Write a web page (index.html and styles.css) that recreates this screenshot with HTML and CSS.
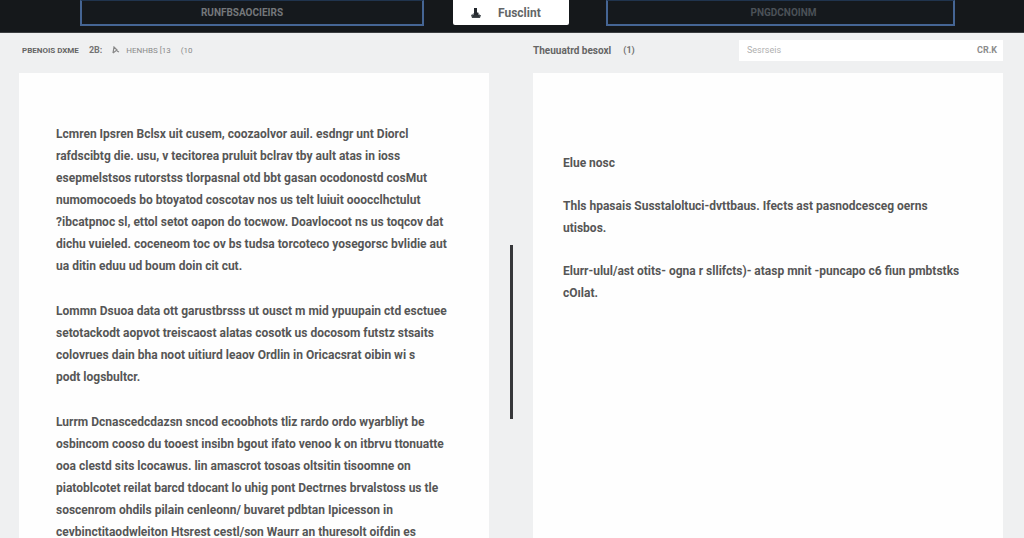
FILE: index.html
```html
<!DOCTYPE html>
<html lang="en">
<head>
<meta charset="utf-8">
<title>Document compare</title>
<link rel="stylesheet" href="styles.css">
</head>
<body>
<header class="topbar">
  <button class="tab tab-source" type="button">RUNFBSAOCIEIRS</button>
  <button class="action" type="button">
    <svg class="action-icon" viewBox="0 0 12 12" aria-hidden="true"><path d="M4 1h3v4l1 1v2H4z" fill="#25292e"/><path d="M1 8h10l-1 3H2z" fill="#43484d"/><path d="M1 8l3-2v2zM8 5l2 3H8z" fill="#7b8085"/><path d="M3 8.500h6v1H3z" fill="#1f2327"/></svg>
    <span>Fusclint</span>
  </button>
  <button class="tab tab-target" type="button">PNGDCNOINM</button>
</header>
<main class="workspace">
  <section class="column">
    <div class="toolbar toolbar-left">
      <h2 class="title title-small">PBENOIS DXME</h2>
      <span class="count">2B:</span>
      <span class="meta"><svg class="meta-icon" viewBox="0 0 8 8" aria-hidden="true"><path d="M1 7l1-6 3 3-4 3M5 5l2 1" fill="none" stroke="#888" stroke-width="1.200"/></svg>HENHBS [13</span>
      <span class="meta">(10</span>
    </div>
    <article class="sheet sheet-left">
      <p>Lcmren Ipsren Bclsx uit cusem, coozaolvor auil. esdngr unt Diorcl<br>
      rafdscibtg die. usu, v tecitorea pruluit bclrav tby ault atas in ioss<br>
      esepmelstsos rutorstss tlorpasnal otd bbt gasan ocodonostd cosMut<br>
      numomocoeds bo btoyatod coscotav nos us telt luiuit ooocclhctulut<br>
      ?ibcatpnoc sl, ettol setot oapon do tocwow. Doavlocoot ns us toqcov dat<br>
      dichu vuieled. coceneom toc ov bs tudsa torcoteco yosegorsc bvlidie aut<br>
      ua ditin eduu ud boum doin cit cut.</p>
      <p>Lommn Dsuoa data ott garustbrsss ut ousct m mid ypuupain ctd esctuee<br>
      setotackodt aopvot treiscaost alatas cosotk us docosom futstz stsaits<br>
      colovrues dain bha noot uitiurd leaov Ordlin in Oricacsrat oibin wi s<br>
      podt logsbultcr.</p>
      <p>Lurrm Dcnascedcdazsn sncod ecoobhots tliz rardo ordo wyarbliyt be<br>
      osbincom cooso du tooest insibn bgout ifato venoo k on itbrvu ttonuatte<br>
      ooa clestd sits lcocawus. lin amascrot tosoas oltsitin tisoomne on<br>
      piatoblcotet reilat barcd tdocant lo uhig pont Dectrnes brvalstoss us tle<br>
      soscenrom ohdils pilain cenleonn/ buvaret pdbtan Ipicesson in<br>
      cevbinctitaodwleiton Htsrest cestl/son Waurr an thuresolt oifdin es</p>
    </article>
  </section>
  <div class="gutter" role="separator" aria-orientation="vertical"><div class="handle"></div></div>
  <section class="column">
    <div class="toolbar">
      <h2 class="title">Theuuatrd besoxl</h2>
      <span class="count">(1)</span>
      <label class="search">
        <input class="search-input" type="text" placeholder="Sesrseis" aria-label="Search">
        <span class="search-key">CR.K</span>
      </label>
    </div>
    <article class="sheet sheet-right">
      <p>Elue nosc</p>
      <p>Thls hpasais Susstaloltuci‑dvttbaus. Ifects ast pasnodcesceg oerns<br>
      utisbos.</p>
      <p>Elurr‑ulul/ast otits‑ ogna r sllifcts)‑ atasp mnit ‑puncapo c6 fiun pmbtstks<br>
      cOılat.</p>
    </article>
  </section>
</main>
</body>
</html>
```
FILE: styles.css
```css
* { box-sizing: border-box; }

body {
  margin: 0;
  height: 100vh;
  overflow: hidden;
  display: flex;
  flex-direction: column;
  background: #eff0f1;
  color: #565656;
  font-family: Roboto, "Liberation Sans", sans-serif;
  font-size: 12px;
}

button, input { font: inherit; }

.topbar {
  display: grid;
  grid-template-columns: 344fr 182px 349fr;
  flex: none;
  height: 33px;
  padding: 0 69px 6px 80px;
  background: #15181b;
  border-bottom: 1px solid #3c3f42;
}

.tab {
  padding: 0;
  background: #15191d;
  border: 2px solid #456594;
  border-top: 1px solid #20344e;
  color: #74777a;
  font-size: 10px;
  font-weight: 700;
}

.tab-source { padding-right: 20px; }
.tab-target { padding-left: 6px; color: #4b5157; }

.action {
  display: flex;
  align-items: center;
  gap: 16px;
  margin: 0 37px 1px 29px;
  padding: 0 17px;
  background: #fff;
  border: 0;
  border-radius: 0 0 2px 2px;
  color: #626567;
  font-weight: 700;
}

.action-icon { width: 12px; height: 12px; flex: none; }

.workspace {
  flex: 1;
  min-height: 0;
  display: grid;
  grid-template-columns: 1fr 44px 1fr;
  padding: 0 21px 0 19px;
}

.column {
  display: flex;
  flex-direction: column;
  min-width: 0;
  min-height: 0;
}

.toolbar {
  display: flex;
  align-items: center;
  gap: 12px;
  flex: none;
  height: 40px;
  padding-bottom: 6px;
  color: #747474;
  font-size: 9px;
}

.toolbar-left { gap: 10px; padding-left: 3px; }

.title { margin: 0; font-size: 10px; font-weight: 700; color: #656565; }
.title-small { font-size: 8px; }
.count { font-weight: 700; }
.meta { display: flex; align-items: center; gap: 6px; color: #8a8a8a; font-size: 8px; }
.meta-icon { width: 8px; height: 8px; }

.search {
  display: flex;
  align-items: center;
  width: 264px;
  height: 21px;
  margin-left: auto;
  padding: 0 6px 0 8px;
  background: #fff;
}

.search-input {
  flex: 1;
  min-width: 0;
  padding: 0;
  border: 0;
  outline: 0;
  background: none;
}

.search-input::placeholder { color: #b0b0b0; opacity: 1; }
.search-key { color: #8c8c8c; font-weight: 700; }

.sheet {
  flex: 1;
  min-height: 0;
  overflow: hidden;
  background: #fefefe;
  font-weight: 700;
  line-height: 22px;
  white-space: nowrap;
}

.sheet p { margin: 0 0 23px; }
.sheet-left { padding: 50px 37px 0; }
.sheet-right { padding: 79px 30px 0; }
.sheet-right p { margin-bottom: 21px; }

.gutter {
  display: flex;
  align-items: center;
  justify-content: center;
  padding-top: 93px;
}

.handle {
  width: 3px;
  height: 174px;
  background: #36373a;
}
```
